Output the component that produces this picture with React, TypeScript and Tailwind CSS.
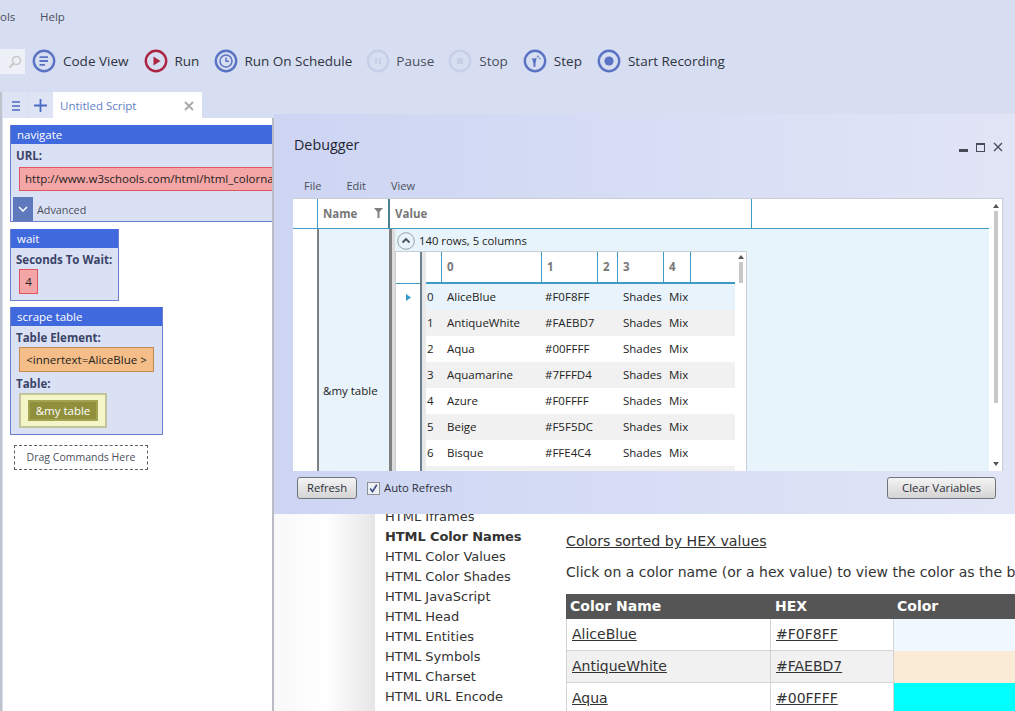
import React from "react";

const ui = "font-['Open_Sans','Noto_Sans',sans-serif]";

function Ring({ color, children }: { color: string; children?: React.ReactNode }) {
  return (
    <svg width="24" height="24" viewBox="0 0 24 24" fill="none" className="shrink-0">
      <circle cx="12" cy="12" r="10.2" stroke={color} strokeWidth="2.4" />
      {children}
    </svg>
  );
}

function Tool({ icon, label, ml, faded, gap = "gap-[7px]" }: { icon: React.ReactNode; label: string; ml: string; faded?: boolean; gap?: string }) {
  return (
    <div className={`flex items-center ${gap} ${ml}`}>
      {icon}
      <span className={`text-[13.5px] whitespace-nowrap ${faded ? "text-[#4a4f5c]" : "text-[#2e3440]"}`}>{label}</span>
    </div>
  );
}

const rows = [
  ["0", "AliceBlue", "#F0F8FF"],
  ["1", "AntiqueWhite", "#FAEBD7"],
  ["2", "Aqua", "#00FFFF"],
  ["3", "Aquamarine", "#7FFFD4"],
  ["4", "Azure", "#F0FFFF"],
  ["5", "Beige", "#F5F5DC"],
  ["6", "Bisque", "#FFE4C4"],
  ["", "", ""],
];

const cols = "grid grid-cols-[15px_100px_56px_20px_46px_27px_45px]";

function InnerGrid() {
  return (
    <div className="flex w-[352px] h-[220px] shrink-0 border-t border-l border-r border-[#c9ced6] bg-white overflow-hidden">
      <div className="w-[24px] shrink-0 flex flex-col">
        <div className="h-[32px] shrink-0 border-b border-[#3f9cc4]" />
        <div className="h-[26px] shrink-0 flex items-center justify-center pl-[1px]">
          <svg width="5" height="7" viewBox="0 0 5 7"><path d="M0 0 L5 3.5 L0 7 Z" fill="#2f9ccb" /></svg>
        </div>
      </div>
      <div className="w-[2px] shrink-0 bg-[#6b7f8c]" />
      <div className="w-[4px] shrink-0 bg-[#e9e9e9]" />
      <div className="w-[309px] shrink-0 flex flex-col">
        <div className={`${cols} h-[32px] shrink-0 border-b-2 border-[#3f9cc4] text-[11.5px] font-bold text-[#777777]`}>
          <div />
          {["0", "1", "2", "3", "4", ""].map((h, i) => (
            <div key={i} className="border-l border-[#3f9cc4] pl-[5px] flex items-center">{h}</div>
          ))}
        </div>
        {rows.map((r, i) => (
          <div
            key={i}
            className={`${cols} h-[26px] shrink-0 items-center text-[11.5px] text-[#222222] ${
              i === 0 ? "bg-[#e8f3fb]" : i % 2 ? "bg-[#f1f1f1]" : "bg-white"
            }`}
          >
            <div className="pl-[1px]">{r[0]}</div>
            <div className="pl-[6px]">{r[1]}</div>
            <div className="pl-[4px]">{r[2]}</div>
            <div />
            <div className="pl-[6px]">{r[0] ? "Shades" : ""}</div>
            <div className="pl-[6px]">{r[0] ? "Mix" : ""}</div>
            <div />
          </div>
        ))}
      </div>
      <div className="flex-1 flex flex-col items-center pt-[3px]">
        <div className="w-0 h-0 border-l-[3px] border-r-[3px] border-b-[4px] border-l-transparent border-r-transparent border-b-[#555555]" />
        <div className="w-[4px] h-[21px] bg-[#c8c8c8] mt-[3px]" />
      </div>
    </div>
  );
}

function Debugger() {
  return (
    <div className={`absolute left-[274px] top-[114px] w-[741px] h-[400px] flex flex-col bg-gradient-to-r from-[#cdd5f3] to-[#e1e5f6] ${ui}`}>
      <div className="h-[60px] shrink-0 flex items-start justify-between pl-[20px] pr-[12px] pt-[20px]">
        <span className="text-[14.3px] leading-[22px] text-[#1f2430]">Debugger</span>
        <div className="flex items-center gap-[8px] pt-[8px]">
          <div className="w-[9px] h-[3px] bg-[#444b55] mt-[6px]" />
          <div className="w-[9px] h-[9px] border border-[#444b55] border-t-2" />
          <svg width="10" height="10" viewBox="0 0 10 10"><path d="M1 1 L9 9 M9 1 L1 9" stroke="#444b55" strokeWidth="1.3" /></svg>
        </div>
      </div>
      <div className="h-[24px] shrink-0 flex items-center gap-[25px] pl-[30px] text-[11px] text-[#4a4f5c]">
        <span>File</span>
        <span>Edit</span>
        <span>View</span>
      </div>
      <div className="ml-[19px] w-[710px] h-[273px] shrink-0 flex bg-white border-t border-r border-[#c9ced6] overflow-hidden">
        <div className="w-[696px] shrink-0 flex flex-col">
          <div className="h-[30px] shrink-0 flex border-b border-[#3f9cc4] text-[11.5px] font-bold text-[#777777]">
            <div className="w-[24px]" />
            <div className="w-[71px] border-l border-[#3f9cc4] pl-[5px] flex items-center justify-between pr-[5px]">
              <span>Name</span>
              <svg width="9" height="10" viewBox="0 0 9 10" className="mb-[2px]"><path d="M0 0 H9 L5.5 4 V10 H3.5 V4 Z" fill="#808080" /></svg>
            </div>
            <div className="w-[2px] bg-[#4b7f96]" />
            <div className="w-[361px] pl-[5px] flex items-center">Value</div>
            <div className="border-l border-[#3f9cc4] flex-1" />
          </div>
          <div className="flex-1 flex min-h-0">
            <div className="w-[24px] shrink-0 bg-white" />
            <div className="w-[72px] shrink-0 border-l-2 border-[#808080] bg-[#e8f3fb] pl-[4px] pt-[153px] leading-[18px] text-[11.5px] text-[#222222] whitespace-nowrap">&amp;my table</div>
            <div className="w-[3px] shrink-0 bg-[#808080]" />
            <div className="w-[3px] shrink-0 bg-[#dcdcdc]" />
            <div className="flex-1 bg-[#e8f4fb] flex flex-col">
              <div className="h-[22px] shrink-0 flex items-center gap-[4px] pl-[2px] pt-[2px] text-[11.3px] text-[#222222]">
                <svg width="18" height="18" viewBox="0 0 18 18" fill="none">
                  <circle cx="9" cy="9" r="8.3" stroke="#9aa0a6" />
                  <path d="M5.5 10.5 L9 7 L12.5 10.5" stroke="#4a4f55" strokeWidth="1.8" />
                </svg>
                <span>140 rows, 5 columns</span>
              </div>
              <InnerGrid />
            </div>
          </div>
        </div>
        <div className="flex-1 flex flex-col items-center justify-between py-[5px] bg-white">
          <div className="flex flex-col items-center">
            <div className="w-0 h-0 border-l-[3px] border-r-[3px] border-b-[4px] border-l-transparent border-r-transparent border-b-[#555555]" />
            <div className="w-[4px] h-[192px] bg-[#c8c8c8] mt-[3px]" />
          </div>
          <div className="w-0 h-0 border-l-[3px] border-r-[3px] border-t-[4px] border-l-transparent border-r-transparent border-t-[#555555]" />
        </div>
      </div>
      <div className="flex-1 flex items-start justify-between pl-[23px] pr-[19px] pt-[6px] text-[#2a2f3a]">
        <div className="flex items-center">
          <button className="w-[60px] h-[22px] pt-[1px] text-[11.2px] rounded-[3px] border border-[#70757c] bg-gradient-to-b from-[#f4f4f4] to-[#d4d4d4]">Refresh</button>
          <div className="ml-[10px] w-[13px] h-[13px] border border-[#8e8f8f] bg-[#eef0f8] flex items-center justify-center">
            <svg width="9" height="9" viewBox="0 0 9 9" fill="none"><path d="M1.2 4.5 L3.5 7.6 L7.8 0.8" stroke="#3b4a80" strokeWidth="1.6" /></svg>
          </div>
          <span className="ml-[4px] pt-[1px] text-[11.3px]">Auto Refresh</span>
        </div>
        <button className="w-[109px] h-[22px] text-[11.4px] rounded-[3px] border border-[#70757c] bg-gradient-to-b from-[#f4f4f4] to-[#d4d4d4]">Clear Variables</button>
      </div>
    </div>
  );
}

function Card({ title, w, children, className = "" }: { title: string; w: string; children: React.ReactNode; className?: string }) {
  return (
    <div className={`${w} shrink-0 border border-[#6a80cf] border-t-0 bg-[#dbe1f4] flex flex-col ${className}`}>
      <div className="h-[19px] shrink-0 bg-[#3f69dc] text-white text-[11.5px] leading-[20px] pl-[6px]">{title}</div>
      {children}
    </div>
  );
}

function Label({ children }: { children: React.ReactNode }) {
  return <div className="text-[11.5px] font-bold text-[#3a4468] leading-[18px] pl-[5px]">{children}</div>;
}

function LeftPanel() {
  return (
    <div className={`w-[271px] shrink-0 bg-white border-r-2 border-[#b9bcc4] flex flex-col items-start pl-[7px] pt-[7px] overflow-hidden ${ui}`}>
      <Card title="navigate" w="w-[280px]" className="h-[97px]">
        <div className="pt-[3px]"><Label>URL:</Label></div>
        <div className="ml-[8px] mt-[2px] h-[24px] border border-[#e0565c] bg-[#f4a6a6] text-[11.5px] leading-[22px] pl-[5px] text-[#222222] whitespace-nowrap overflow-hidden">
          http://www.w3schools.com/html/html_colornames.asp
        </div>
        <div className="flex items-center mt-[6px] ml-[2px] gap-[4px]">
          <div className="w-[20px] h-[24px] bg-[#5f79bd] flex items-center justify-center">
            <svg width="10" height="6" viewBox="0 0 10 6" fill="none"><path d="M1 1 L5 5 L9 1" stroke="#ffffff" strokeWidth="1.5" /></svg>
          </div>
          <span className="text-[10.8px] pt-[2px] text-[#4a4f5c]">Advanced</span>
        </div>
      </Card>
      <Card title="wait" w="w-[109px]" className="h-[72px] mt-[7px]">
        <div className="pt-[3px]"><Label>Seconds To Wait:</Label></div>
        <div className="ml-[8px] w-[19px] h-[25px] border border-[#e0565c] bg-[#f4a6a6] text-[11.5px] leading-[23px] text-center text-[#222222]">4</div>
      </Card>
      <Card title="scrape table" w="w-[153px]" className="h-[128px] mt-[6px]">
        <div className="pt-[3px]"><Label>Table Element:</Label></div>
        <div className="ml-[8px] w-[135px] h-[25px] border border-[#c48a50] bg-[#f5bd87] text-[11.5px] leading-[23px] text-center text-[#222222] whitespace-nowrap">&lt;innertext=AliceBlue &gt;</div>
        <div className="pt-[3px]"><Label>Table:</Label></div>
        <div className="ml-[8px] w-[88px] h-[35px] border-2 border-[#c3c49a] bg-[#f4f5c8] flex items-center justify-center">
          <div className="w-[70px] h-[21px] bg-[#8f8f3c] border-2 border-[#a3a352] text-[11.5px] leading-[17px] text-center text-white">&amp;my table</div>
        </div>
      </Card>
      <div className="mt-[10px] ml-[4px] w-[134px] h-[25px] border border-dashed border-[#5a5f68] flex items-center justify-center text-[10.5px] text-[#4a4f5c] whitespace-nowrap">Drag Commands Here</div>
    </div>
  );
}

const webCell = "border-r border-b border-[#d4d4d4] px-[5px] underline flex items-center";

function WebPage() {
  const links = ["HTML Iframes", "HTML Color Names", "HTML Color Values", "HTML Color Shades", "HTML JavaScript", "HTML Head", "HTML Entities", "HTML Symbols", "HTML Charset", "HTML URL Encode"];
  const table = [
    ["AliceBlue", "#F0F8FF", "bg-[#F0F8FF]", "bg-white"],
    ["AntiqueWhite", "#FAEBD7", "bg-[#FAEBD7]", "bg-[#f1f1f1]"],
    ["Aqua", "#00FFFF", "bg-[#00FFFF]", "bg-white"],
  ];
  return (
    <div className="flex-1 min-w-0 flex bg-white overflow-hidden font-['DejaVu_Sans',sans-serif] text-[#333333]">
      <div className="w-[101px] shrink-0 bg-gradient-to-r from-[#f8f8f8] via-[#ffffff] to-[#e6e6e6]" />
      <div className="w-[191px] shrink-0 pl-[10px] pt-[389px] text-[13px] leading-[20px] whitespace-nowrap">
        {links.map((l, i) => (
          <div key={l} className={i === 1 ? "font-bold tracking-[-0.1px]" : ""}>{l}</div>
        ))}
      </div>
      <div className="flex-1 min-w-0 pt-[412px] text-[14px]">
        <div className="underline leading-[22px] text-[14.2px] whitespace-nowrap">Colors sorted by HEX values</div>
        <div className="leading-[22px] mt-[9px] whitespace-nowrap">Click on a color name (or a hex value) to view the color as the background</div>
        <div className="mt-[11px] w-[600px]">
          <div className="grid grid-cols-[205px_123px_272px] h-[25px] bg-[#555555] text-white font-bold items-center">
            <div className="pl-[4px]">Color Name</div>
            <div className="pl-[4px]">HEX</div>
            <div className="pl-[3px]">Color</div>
          </div>
          {table.map((t) => (
            <div key={t[0]} className={`grid grid-cols-[205px_123px_272px] h-[32px] ${t[3]}`}>
              <div className={`${webCell} border-l`}>{t[0]}</div>
              <div className={webCell}>{t[1]}</div>
              <div className={t[2]} />
            </div>
          ))}
        </div>
      </div>
    </div>
  );
}

export default function App() {
  return (
    <div className="relative w-[1015px] h-[711px] overflow-hidden bg-[#d8def2] flex flex-col">
      <div className={`h-[34px] shrink-0 flex items-center text-[11.5px] text-[#4a4f5c] ${ui}`}>
        <span className="w-[40px]">ols</span>
        <span>Help</span>
      </div>
      <div className={`h-[58px] shrink-0 flex items-start pt-[15px] ${ui}`}>
        <div className="w-[25px] h-[25px] bg-[#eef0f8] flex items-center justify-center pl-[4px]">
          <svg width="14" height="14" viewBox="0 0 14 14" fill="none"><circle cx="8.5" cy="5.5" r="4" stroke="#c9c9c9" strokeWidth="1.6" /><path d="M5.5 8.5 L1.5 12.5" stroke="#c9c9c9" strokeWidth="2" /></svg>
        </div>
        <Tool ml="ml-[7px]" label="Code View" icon={<Ring color="#5b73c3"><path d="M7.5 8.2 H16 M7.5 12 H16 M7.5 15.8 H13" stroke="#5b73c3" strokeWidth="1.8" /></Ring>} />
        <Tool ml="ml-[16px]" gap="gap-[6px]" label="Run" icon={<Ring color="#ab2440"><path d="M9.5 7.5 L16.5 12 L9.5 16.5 Z" fill="#ab2440" /></Ring>} />
        <Tool ml="ml-[15px]" gap="gap-[6px]" label="Run On Schedule" icon={<Ring color="#5b73c3"><circle cx="12" cy="12" r="6" stroke="#5b73c3" strokeWidth="1.5" /><path d="M12 8.5 V12.3 H15" stroke="#5b73c3" strokeWidth="1.4" /></Ring>} />
        <Tool ml="ml-[14px]" gap="gap-[6px]" faded label="Pause" icon={<Ring color="#c6cee8"><path d="M10 9 V15 M14 9 V15" stroke="#c6cee8" strokeWidth="2" /></Ring>} />
        <Tool ml="ml-[14px]" gap="gap-[7px]" faded label="Stop" icon={<Ring color="#c6cee8"><rect x="9" y="9" width="6" height="6" fill="#c6cee8" /></Ring>} />
        <Tool ml="ml-[15px]" label="Step" icon={<Ring color="#5b73c3"><path d="M8.5 9 C10.5 10 12.5 9.5 13.5 8.5 C13.5 11 12.5 12.5 12.5 17.5 C11.5 18.5 10.5 18 10.5 17 C10.5 14 10 12 8.5 9 Z" fill="#5b73c3" /><circle cx="15" cy="7.5" r="0.9" fill="#5b73c3" /><circle cx="16.8" cy="9.5" r="0.8" fill="#5b73c3" /></Ring>} />
        <Tool ml="ml-[15px]" label="Start Recording" icon={<Ring color="#5b73c3"><circle cx="12" cy="12" r="4.6" fill="#5b73c3" /></Ring>} />
      </div>
      <div className={`h-[26px] shrink-0 flex border-l-2 border-[#bfc3cc] pl-[1px] ${ui}`}>
        <div className="w-[24px] bg-[#dfe4f5] flex items-center justify-center pl-[2px] pt-[1px] mr-[1px]">
          <svg width="8" height="10" viewBox="0 0 8 10"><path d="M0 1 H8 M0 5 H8 M0 9 H8" stroke="#4a6bc4" strokeWidth="1.6" /></svg>
        </div>
        <div className="w-[25px] bg-[#dfe4f5] flex items-center justify-center pt-[1px]">
          <svg width="13" height="13" viewBox="0 0 13 13"><path d="M6.5 0 V13 M0 6.5 H13" stroke="#4a6bc4" strokeWidth="1.8" /></svg>
        </div>
        <div className="w-[149px] bg-white flex items-center justify-between pl-[7px] pr-[8px] pt-[1px]">
          <span className="text-[11.5px] text-[#5f7fc6]">Untitled Script</span>
          <svg width="10" height="10" viewBox="0 0 10 10"><path d="M1 1 L9 9 M9 1 L1 9" stroke="#a8a8a8" strokeWidth="1.8" /></svg>
        </div>
      </div>
      <div className="flex-1 min-h-0 flex border-l-2 border-[#bfc3cc] pl-[1px]">
        <LeftPanel />
        <WebPage />
      </div>
      <Debugger />
    </div>
  );
}
